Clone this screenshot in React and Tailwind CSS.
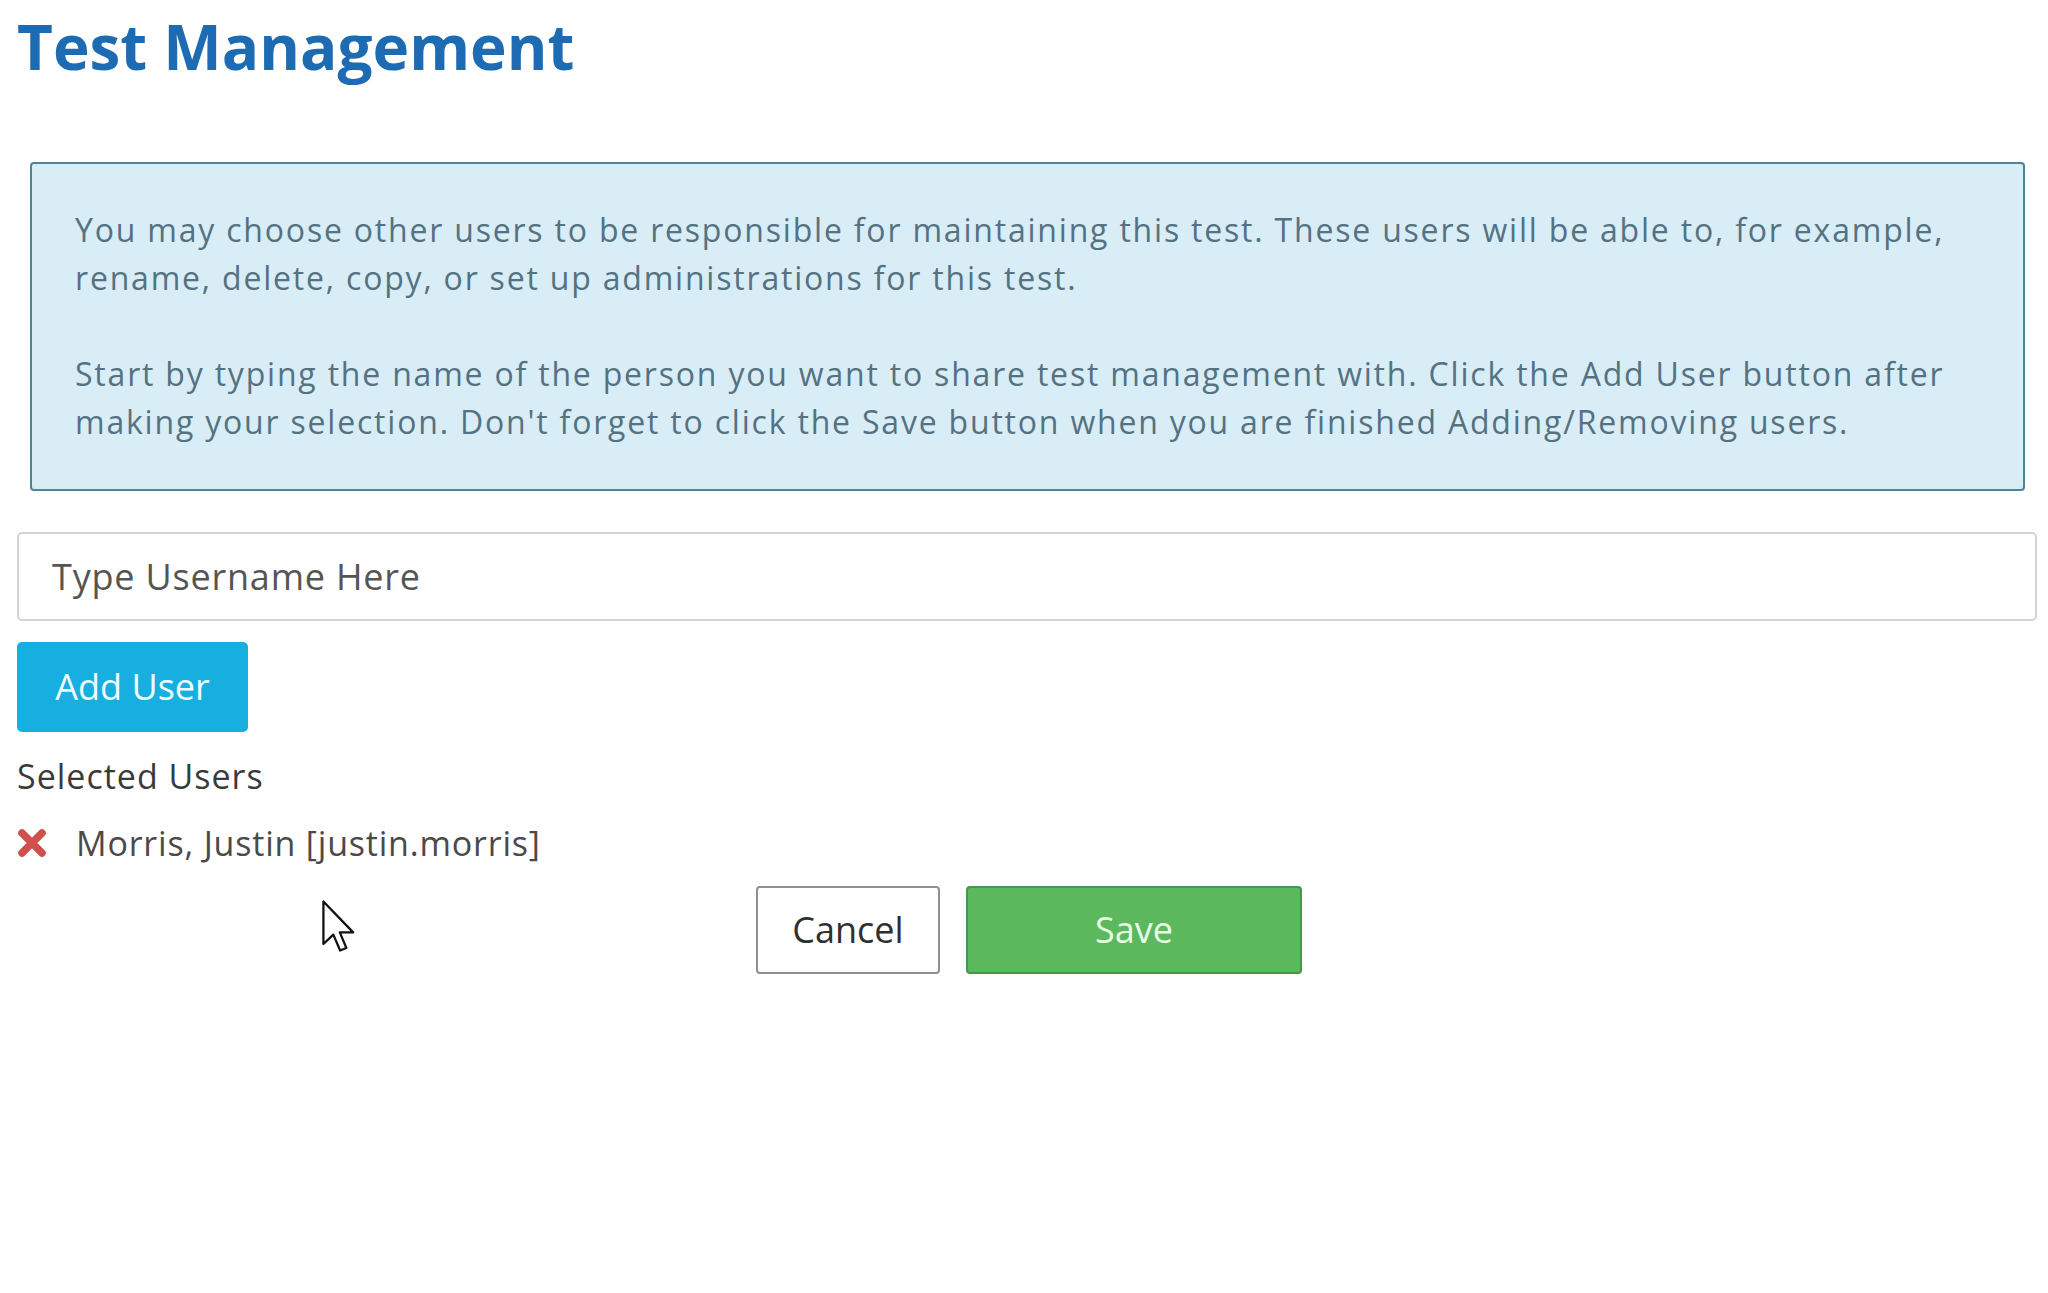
import React, { useState } from 'react';

const RemoveIcon = () => (
  <svg width="30" height="28" viewBox="0 0 30 28" className="shrink-0">
    <path d="M5 4 L25 24 M25 4 L5 24" stroke="#d0514b" strokeWidth="7.5" strokeLinecap="round" />
  </svg>
);

const Cursor = () => (
  <svg
    width="34"
    height="54"
    viewBox="0 0 12 19"
    className="absolute left-[322px] top-[900px]"
  >
    <path
      d="M0.5 0.5 L0.5 15.5 L4 12.2 L6.4 17.8 L8.6 16.9 L6.3 11.4 L11 11.4 Z"
      fill="#fff"
      stroke="#111"
      strokeWidth="0.8"
      strokeLinejoin="round"
    />
  </svg>
);

const App = () => {
  const [username, setUsername] = useState('');
  const [users, setUsers] = useState([{ name: 'Morris, Justin', login: 'justin.morris' }]);

  return (
    <div
      className="relative min-h-[1293px] bg-white pl-[17px] pr-[11px]"
      style={{ fontFamily: '"Open Sans", "Liberation Sans", sans-serif' }}
    >
      <h1 className="pt-[15px] text-[62px] leading-[62px] font-bold text-[#1d6bb2]">
        Test Management
      </h1>

      <div className="mt-[85px] ml-[13px] mr-[12px] rounded-[4px] border-2 border-[#4f8494] bg-[#d9edf7] pt-[42px] pb-[43px] pl-[43px] pr-[30px] text-[32px] leading-[48px] tracking-[1.8px] text-[#547282]">
        You may choose other users to be responsible for maintaining this test. These users will be able to, for example, rename, delete, copy, or set up administrations for this test.
        <br />
        <br />
        Start by typing the name of the person you want to share test management with. Click the Add User button after making your selection. Don't forget to click the Save button when you are finished Adding/Removing users.
      </div>

      <input
        type="text"
        value={username}
        onChange={(e) => setUsername(e.target.value)}
        placeholder="Type Username Here"
        className="mt-[41px] block h-[89px] w-full rounded-[5px] border-2 border-[#d3d3d3] bg-white px-[33px] text-[36px] tracking-[0.8px] text-[#555] placeholder:text-[#555] outline-none"
      />

      <button
        type="button"
        className="mt-[21px] block h-[90px] w-[231px] rounded-[5px] bg-[#17aee0] text-[36px] text-[#effcff]"
      >
        Add User
      </button>

      <div className="mt-[20px] text-[34px] leading-[48px] tracking-[1px] text-[#3a3a3a]">Selected Users</div>

      {users.map((u) => (
        <div key={u.login} className="mt-[19px] flex items-center h-[48px] text-[34px] tracking-[0.8px] text-[#4a4a4a]">
          <button type="button" onClick={() => setUsers([])} className="flex items-center">
            <RemoveIcon />
          </button>
          <span className="ml-[29px]">
            {u.name} [{u.login}]
          </span>
        </div>
      ))}

      <div className="mt-[19px] flex justify-center gap-[26px] pl-[4px]">
        <button
          type="button"
          className="h-[88px] w-[184px] rounded-[4px] border-2 border-[#8f8f8f] bg-white text-[36px] text-[#2f2f2f]"
        >
          Cancel
        </button>
        <button
          type="button"
          className="h-[88px] w-[336px] rounded-[4px] border-2 border-[#46994a] bg-[#5cb85c] text-[36px] text-[#e6ffe6]"
        >
          Save
        </button>
      </div>

      <Cursor />
    </div>
  );
};

export default App;
